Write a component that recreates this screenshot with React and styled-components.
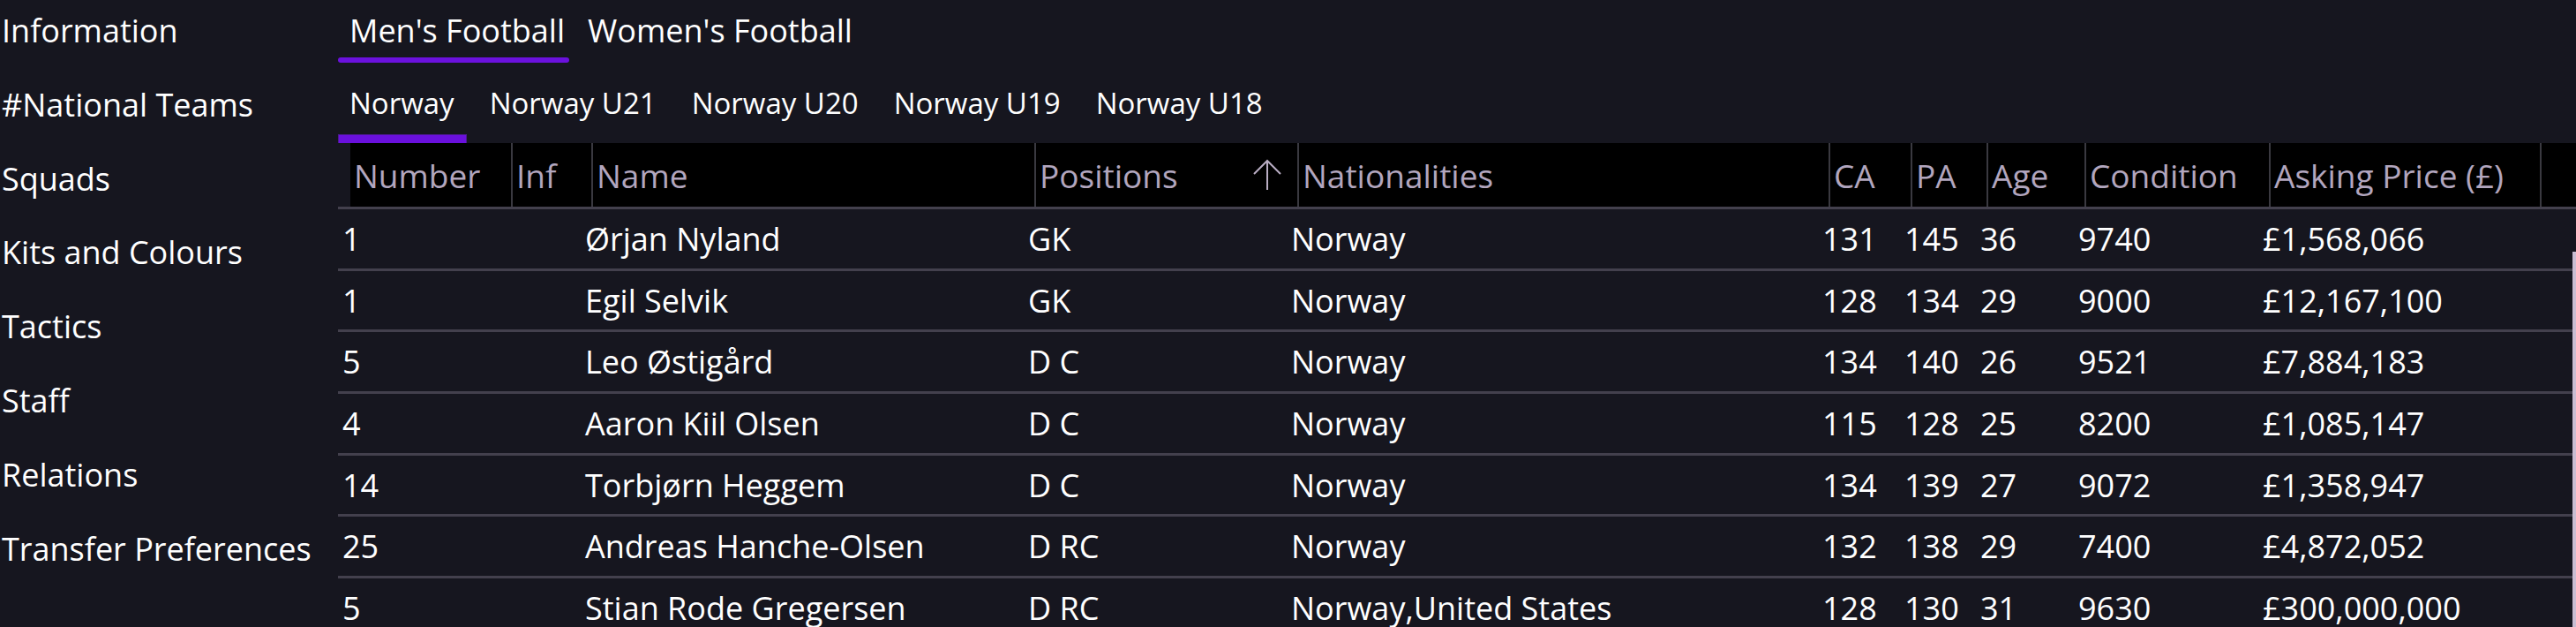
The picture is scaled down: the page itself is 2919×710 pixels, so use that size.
import React from "react"
import styled, { createGlobalStyle } from "styled-components"

const GlobalStyle = createGlobalStyle`
  html, body {
    margin: 0;
    padding: 0;
    background: #16161f;
  }
  body {
    font-family: "Open Sans", "Noto Sans", sans-serif;
    color: #ffffff;
    overflow: hidden;
  }
  * {
    box-sizing: border-box;
  }
`

const COLUMNS = "184px 91px 502px 298px 602px 93px 86px 111px 209px 307px 1fr"

const Page = styled.div`
  display: flex;
  height: 710px;
  overflow: hidden;
`

const Sidebar = styled.nav`
  width: 383px;
  flex: none;
  display: flex;
  flex-direction: column;
  gap: 34.8px;
  padding: 10px 0 0 2px;
`

const NavItem = styled.div`
  font-size: 36px;
  line-height: 49px;
  white-space: nowrap;
`

const Main = styled.main`
  flex: 1;
  min-width: 0;
  display: flex;
  flex-direction: column;
`

const TabStrip = styled.div`
  display: flex;
  gap: ${({ $gap }) => $gap}px;
  margin-top: ${({ $top }) => $top}px;
`

const Tab = styled.div`
  display: flex;
  flex-direction: column;
`

const TabLabel = styled.div`
  font-size: ${({ $size }) => $size}px;
  line-height: ${({ $line }) => $line}px;
  padding: ${({ $pad }) => $pad};
  white-space: nowrap;
`

const TopBar = styled.div`
  margin-top: 6px;
  height: 6px;
  border-radius: 3px;
  background: ${({ $active }) => ($active ? "#6b11dd" : "transparent")};
`

const SubBar = styled.div`
  margin-top: 13px;
  height: 10px;
  background: ${({ $active }) => ($active ? "#6a10dc" : "transparent")};
  border: 1px solid ${({ $active }) => ($active ? "#4c1a8f" : "transparent")};
  border-bottom: none;
`

const HeadWrap = styled.div`
  padding-left: 14px;
  border-bottom: 3px solid #43404d;
`

const HeadRow = styled.div`
  display: grid;
  grid-template-columns: ${COLUMNS};
  height: 72px;
  background: #000000;
`

const HeadCell = styled.div`
  display: flex;
  align-items: center;
  justify-content: space-between;
  padding: 0 ${({ $sorted }) => ($sorted ? "17px" : "0")} 0 4px;
  border-right: ${({ $last }) => ($last ? "none" : "2px solid #3a3940")};
  font-size: 37px;
  color: #b2a6be;
  white-space: nowrap;
  overflow: hidden;
`

const Body = styled.div`
  display: flex;
  flex: 1;
  min-height: 0;
`

const Rows = styled.div`
  flex: 1;
  min-width: 0;
`

const Row = styled.div`
  display: grid;
  grid-template-columns: ${COLUMNS};
  align-items: center;
  height: 69.7px;
  border-bottom: 3px solid #43404d;
`

const Cell = styled.div`
  padding-left: 5px;
  font-size: 36px;
  white-space: nowrap;
`

const ScrollTrack = styled.div`
  width: 4px;
  flex: none;
  display: flex;
  flex-direction: column;
  padding-top: 48px;
`

const ScrollThumb = styled.div`
  flex: 1;
  background: #c9bdd2;
`

const SortArrow = () => (
  <svg width="34" height="36" viewBox="0 0 34 36" fill="none">
    <path d="M17 35V2M2 17L17 2L32 17" stroke="#b9adc3" strokeWidth="2" />
  </svg>
)

const navItems = [
  "Information",
  "#National Teams",
  "Squads",
  "Kits and Colours",
  "Tactics",
  "Staff",
  "Relations",
  "Transfer Preferences",
]

const subTabs = ["Norway", "Norway U21", "Norway U20", "Norway U19", "Norway U18"]

const headers = [
  "Number",
  "Inf",
  "Name",
  "Positions",
  "Nationalities",
  "CA",
  "PA",
  "Age",
  "Condition",
  "Asking Price (£)",
  "",
]

const players = [
  ["1", "", "Ørjan Nyland", "GK", "Norway", "131", "145", "36", "9740", "£1,568,066"],
  ["1", "", "Egil Selvik", "GK", "Norway", "128", "134", "29", "9000", "£12,167,100"],
  ["5", "", "Leo Østigård", "D C", "Norway", "134", "140", "26", "9521", "£7,884,183"],
  ["4", "", "Aaron Kiil Olsen", "D C", "Norway", "115", "128", "25", "8200", "£1,085,147"],
  ["14", "", "Torbjørn Heggem", "D C", "Norway", "134", "139", "27", "9072", "£1,358,947"],
  ["25", "", "Andreas Hanche-Olsen", "D RC", "Norway", "132", "138", "29", "7400", "£4,872,052"],
  ["5", "", "Stian Rode Gregersen", "D RC", "Norway,United States", "128", "130", "31", "9630", "£300,000,000"],
]

export default function App() {
  return (
    <>
      <GlobalStyle />
      <Page>
        <Sidebar>
          {navItems.map((item) => (
            <NavItem key={item}>{item}</NavItem>
          ))}
        </Sidebar>
        <Main>
          <TabStrip $gap={8} $top={10}>
            {["Men's Football", "Women's Football"].map((t, i) => (
              <Tab key={t}>
                <TabLabel $size={36} $line={49} $pad="0 5px 0 13px">
                  {t}
                </TabLabel>
                <TopBar $active={i === 0} />
              </Tab>
            ))}
          </TabStrip>
          <TabStrip $gap={13} $top={23}>
            {subTabs.map((t, i) => (
              <Tab key={t}>
                <TabLabel $size={33} $line={45} $pad="0 14px 0 13px">
                  {t}
                </TabLabel>
                <SubBar $active={i === 0} />
              </Tab>
            ))}
          </TabStrip>
          <HeadWrap>
            <HeadRow>
              {headers.map((h, i) => (
                <HeadCell key={i} $sorted={h === "Positions"} $last={i === headers.length - 1}>
                  <span>{h}</span>
                  {h === "Positions" && <SortArrow />}
                </HeadCell>
              ))}
            </HeadRow>
          </HeadWrap>
          <Body>
            <Rows>
              {players.map((p, r) => (
                <Row key={r}>
                  {p.map((v, c) => (
                    <Cell key={c}>{v}</Cell>
                  ))}
                </Row>
              ))}
            </Rows>
            <ScrollTrack>
              <ScrollThumb />
            </ScrollTrack>
          </Body>
        </Main>
      </Page>
    </>
  )
}
